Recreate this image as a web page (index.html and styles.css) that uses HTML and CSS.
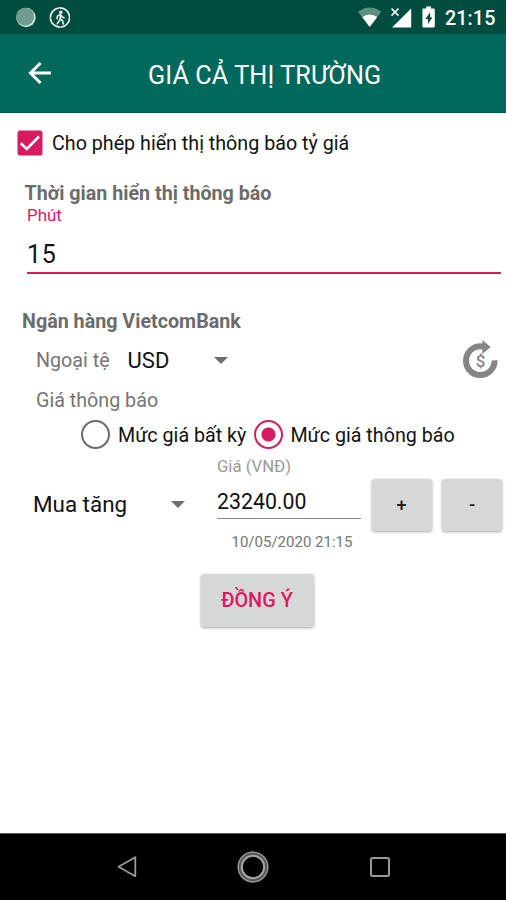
FILE: index.html
```html
<!DOCTYPE html>
<html lang="vi">
<head>
<meta charset="utf-8">
<title>Giá cả thị trường</title>
<link rel="stylesheet" href="styles.css">
</head>
<body>
<div class="screen">
  <header class="status">
    <svg class="status-left" width="60" height="34" viewBox="0 0 60 34">
      <circle cx="16" cy="17.5" r="9.7" fill="#d3e6df"/>
      <circle cx="15.2" cy="16.7" r="9" fill="#6f9c91"/>
      <g fill="none" stroke="#e6f1ed" stroke-linecap="round">
        <circle cx="50" cy="17.5" r="9.6" stroke-width="1.7" stroke-dasharray="13.5 1.6"/>
        <path d="M50.2 15v4.2l-2.9 4.6M50.3 18.8l2.2 2 .8 3.2M50 14.4l-2.6 1.7-.4 2.6M50.6 14.8l1.6 2.2 1.8.8" stroke-width="1.6"/>
      </g>
      <circle cx="50.8" cy="12.2" r="1.7" fill="#e6f1ed"/>
    </svg>
    <svg class="status-right" width="82" height="34" viewBox="0 0 82 34">
      <path d="M0 11.8Q11.7 3.2 23.4 11.8L11.7 27z" fill="#5d8f83"/>
      <path d="M4.2 17Q11.7 11.8 19.2 17L11.7 27z" fill="#fff"/>
      <path d="M53.200 8.500V27.500H34z" fill="#fff"/>
      <path d="M31 6.500h11v11H31z" fill="#004d40"/>
      <path d="M33.500 8.600l7 7M40.500 8.600l-7 7" stroke="#e8f1ee" stroke-width="1.7"/>
      <path d="M68.300 6.500h4.600v2h2.700q1.200 0 1.200 1.200v16.600q0 1.200-1.200 1.200h-10q-1.200 0-1.200-1.200V9.700q0-1.200 1.200-1.200h2.700z" fill="#fff"/>
      <path d="M72.100 12.300l-4.600 6.700h2.500v5l4.400-6.700h-2.300z" fill="#004d40"/>
    </svg>
    <span class="clock">21:15</span>
  </header>
  <div class="appbar">
    <svg class="back" width="24" height="24" viewBox="0 0 24 24"><path d="M12.500 2L2.500 12l10 10M3 12h20" fill="none" stroke="#fff" stroke-width="3"/></svg>
    <h1 class="title">GIÁ CẢ THỊ TRƯỜNG</h1>
  </div>
  <main class="content">
    <div class="row allow">
      <svg width="26" height="26" viewBox="0 0 26 26"><rect x=".5" y=".5" width="25" height="25" rx="2.500" fill="#d81b60"/><path d="M3.800 13.200l6 5.800L22 6.500" fill="none" stroke="#fff" stroke-width="2.600"/></svg>
      <span class="t-allow">Cho phép hiển thị thông báo tỷ giá</span>
    </div>
    <h2 class="head time">Thời gian hiển thị thông báo</h2>
    <div class="minutes">
      <div class="hint">Phút</div>
      <div class="value">15</div>
    </div>
    <h2 class="head bank">Ngân hàng VietcomBank</h2>
    <div class="row currency">
      <span class="grey">Ngoại tệ</span>
      <span class="usd">USD</span>
      <i class="caret"></i>
      <svg class="refresh" width="36" height="40" viewBox="0 0 36 40">
        <path d="M21 6.650A14.300 14.300 0 1 0 32.600 20.300" fill="none" stroke="#868686" stroke-width="6"/>
        <path d="M20.300 0L28.600 6.900 20.300 14z" fill="#868686"/>
        <text x="18.500" y="26.700" text-anchor="middle" class="dollar">$</text>
      </svg>
    </div>
    <div class="row grey notify"><span>Giá thông báo</span></div>
    <div class="row radios">
      <i class="radio"></i><span class="label">Mức giá bất kỳ</span>
      <i class="radio on"></i><span class="label">Mức giá thông báo</span>
    </div>
    <div class="price">
      <div class="mode"><span>Mua tăng</span><i class="caret"></i></div>
      <div class="field">
        <div class="price-hint"><span>Giá (VNĐ)</span></div>
        <div class="amount"><span>23240.00</span></div>
        <div class="date"><span>10/05/2020 21:15</span></div>
      </div>
      <button class="btn step">+</button>
      <button class="btn step">-</button>
    </div>
    <button class="btn ok">ĐỒNG Ý</button>
  </main>
  <nav class="nav">
    <svg width="20" height="24" viewBox="0 0 20 24"><path d="M18.300 2.200v19L1.500 11.700z" fill="none" stroke="#9a9a9a" stroke-width="1.800" stroke-linejoin="round"/></svg>
    <svg width="34" height="34" viewBox="0 0 34 34" fill="none"><circle cx="17" cy="17" r="13" stroke="#555" stroke-width="5"/><circle cx="17" cy="17" r="14.800" stroke="#9a9a9a" stroke-width="1.200"/><circle cx="17" cy="17" r="11.200" stroke="#a4a4a4" stroke-width="2"/></svg>
    <svg width="20" height="20" viewBox="0 0 20 20"><rect x="1" y="1" width="18" height="18" rx="1.500" fill="none" stroke="#9a9a9a" stroke-width="2"/></svg>
  </nav>
</div>
</body>
</html>
```

FILE: styles.css
```css
* { box-sizing: border-box; }
body { margin: 0; background: #fff; font-family: Roboto, "Liberation Sans", sans-serif; color: #111; }
h1, h2 { margin: 0; }
span { white-space: nowrap; }
svg { display: block; flex: none; }
.screen { width: 506px; height: 900px; display: flex; flex-direction: column; overflow: hidden; }

.status { height: 34px; background: #004d40; display: flex; align-items: center; flex: none; }
.status-left { margin-left: 10px; }
.status-right { margin-left: 288px; }
.clock { margin-left: 5px; padding-top: 3px; line-height: 34px; font-size: 19.7px; font-weight: 500; color: #fff; letter-spacing: .1px; }

.appbar { height: 79px; background: #00695c; border-bottom: 1px solid #00574b; display: flex; align-items: center; flex: none; }
.back { margin-left: 28px; }
.title { margin-left: 96px; padding-top: 6px; font-size: 25.2px; font-weight: 400; line-height: 30px; color: #fff; white-space: nowrap; letter-spacing: .1px; }

.content { flex: 1; display: flex; flex-direction: column; }
.row { display: flex; align-items: center; flex: none; }
.allow { height: 60px; padding-left: 17px; gap: 9px; }
.t-allow { font-size: 19.7px; line-height: 24px; padding-top: 2px; }
.head { font-size: 19.7px; font-weight: 700; color: #6c6c6c; white-space: nowrap; }
.time { height: 32px; line-height: 32px; margin-top: 5px; padding-left: 24.5px; }
.minutes { margin: -4px 5px 0 27px; height: 68px; border-bottom: 2px solid #d02050; }
.hint { font-size: 16.9px; line-height: 18px; color: #d81b60; }
.value { font-size: 25px; line-height: 28px; margin-top: 17px; letter-spacing: .8px; }
.bank { height: 32px; line-height: 33px; margin-top: 31px; padding-left: 22px; }
.grey { color: #757575; font-size: 19.7px; }
.currency { height: 46px; padding-left: 36px; }
.usd { margin-left: 18px; font-size: 22px; }
.caret { flex: none; border: 7px solid transparent; border-top-color: #6d6d6d; border-bottom: 0; width: 0; height: 0; }
.currency .caret { margin-left: 45px; }
.refresh { margin-left: auto; margin-right: 8px; }
.dollar { font: 500 17px Roboto, sans-serif; fill: #868686; }
.notify { height: 32px; padding: 2px 0 0 36px; }
.radios { height: 38px; padding-left: 81px; }
.radio { flex: none; width: 29px; height: 29px; border: 2.5px solid #6c6c6c; border-radius: 50%; }
.radio.on { border-color: #d81b60; margin-left: 8px; background: radial-gradient(circle, #d81b60 6.5px, transparent 7.5px); }
.label { font-size: 19.7px; margin-left: 8px; padding-top: 3px; }
.radio.on + .label { margin-left: 7px; }

.price { display: flex; height: 100px; flex: none; }
.mode { display: flex; align-items: center; width: 217px; height: 50px; margin-top: 26px; padding-left: 33px; font-size: 22.4px; }
.mode .caret { margin-left: 44px; }
.field { width: 143.5px; }
.price-hint { height: 28px; line-height: 28px; font-size: 16.7px; color: #999; }
.amount { height: 38px; line-height: 42px; font-size: 21.3px; border-bottom: 1.5px solid #8a8a8a; }
.date { height: 46px; line-height: 46px; font-size: 15px; color: #757575; padding-left: 14.5px; }
.btn { border: 0; border-radius: 3px; background: #d6d8d7; padding: 0; font-family: inherit; color: #222; box-shadow: 0 1px 3px rgba(0, 0, 0, .35); }
.step { width: 60px; height: 52px; margin: 26px 0 0 11px; padding-bottom: 1px; font-size: 18px; font-weight: 500; }
.step + .step { margin-left: 10.5px; }
.btn.ok { width: 113px; height: 53px; margin: 21px 0 0 200.500px; color: #d81b60; font-size: 19.9px; font-weight: 500; flex: none; }

.nav { height: 67px; background: #000; border-top: 1px solid #555; display: flex; align-items: center; flex: none; padding-left: 117px; }
.nav svg:nth-child(2) { margin-left: 99px; }
.nav svg:nth-child(3) { margin-left: 100px; }
```
